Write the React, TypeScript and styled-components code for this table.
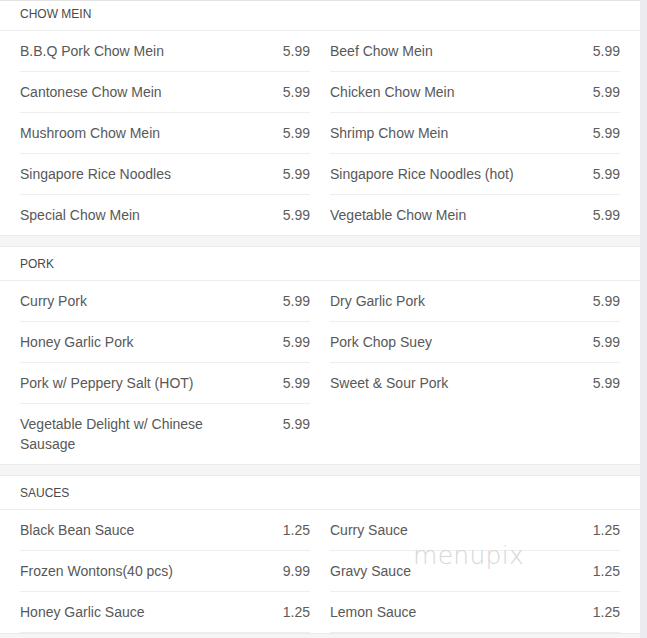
import styled, { createGlobalStyle } from 'styled-components'
import { FC } from 'react'

type Item = { name: string; price: string }
type Section = { title: string; left: Item[]; right: Item[]; continues?: boolean }

const sections: Section[] = [
  {
    title: 'Chow Mein',
    left: [
      { name: 'B.B.Q Pork Chow Mein', price: '5.99' },
      { name: 'Cantonese Chow Mein', price: '5.99' },
      { name: 'Mushroom Chow Mein', price: '5.99' },
      { name: 'Singapore Rice Noodles', price: '5.99' },
      { name: 'Special Chow Mein', price: '5.99' },
    ],
    right: [
      { name: 'Beef Chow Mein', price: '5.99' },
      { name: 'Chicken Chow Mein', price: '5.99' },
      { name: 'Shrimp Chow Mein', price: '5.99' },
      { name: 'Singapore Rice Noodles (hot)', price: '5.99' },
      { name: 'Vegetable Chow Mein', price: '5.99' },
    ],
  },
  {
    title: 'Pork',
    left: [
      { name: 'Curry Pork', price: '5.99' },
      { name: 'Honey Garlic Pork', price: '5.99' },
      { name: 'Pork w/ Peppery Salt (HOT)', price: '5.99' },
      { name: 'Vegetable Delight w/ Chinese Sausage', price: '5.99' },
    ],
    right: [
      { name: 'Dry Garlic Pork', price: '5.99' },
      { name: 'Pork Chop Suey', price: '5.99' },
      { name: 'Sweet & Sour Pork', price: '5.99' },
    ],
  },
  {
    title: 'Sauces',
    continues: true,
    left: [
      { name: 'Black Bean Sauce', price: '1.25' },
      { name: 'Frozen Wontons(40 pcs)', price: '9.99' },
      { name: 'Honey Garlic Sauce', price: '1.25' },
    ],
    right: [
      { name: 'Curry Sauce', price: '1.25' },
      { name: 'Gravy Sauce', price: '1.25' },
      { name: 'Lemon Sauce', price: '1.25' },
    ],
  },
]

const MenuColumn: FC<{ items: Item[]; continues?: boolean }> = ({ items, continues }) => (
  <Column $continues={continues}>
    {items.map((item) => (
      <Row key={item.name}>
        <Name>{item.name}</Name>
        <Price>{item.price}</Price>
      </Row>
    ))}
  </Column>
)

export default function App() {
  return (
    <>
      <GlobalStyle />
      <Viewport>
        <Panel>
          {sections.map((s) => (
            <Card key={s.title}>
              <Header>{s.title}</Header>
              <Grid>
                <MenuColumn items={s.left} continues={s.continues} />
                <MenuColumn items={s.right} continues={s.continues} />
              </Grid>
            </Card>
          ))}
          <Watermark>menupix</Watermark>
        </Panel>
      </Viewport>
    </>
  )
}

const GlobalStyle = createGlobalStyle`
  html, body {
    margin: 0;
    padding: 0;
    background: #ececf0;
    font-family: "Liberation Sans", Arial, sans-serif;
  }
  body {
    height: 638px;
    overflow: hidden;
  }
`

const Viewport = styled.div`
  width: 640px;
  height: 637px;
  overflow: hidden;
  border-top: 1px solid #e4e4e4;
  background: #f5f5f5;
`

const Panel = styled.div`
  position: relative;
  display: flex;
  flex-direction: column;
  gap: 10px;
  margin-top: -5px;
`

const Card = styled.section`
  background: #fff;
  border-top: 1px solid #ebebeb;
  border-bottom: 1px solid #ebebeb;
`

const Header = styled.div`
  height: 33px;
  line-height: 35px;
  padding: 0 20px;
  border-bottom: 1px solid #ececec;
  font-size: 12px;
  color: #4a4a4a;
  text-transform: uppercase;
`

const Grid = styled.div`
  display: grid;
  grid-template-columns: 290px 290px;
  column-gap: 20px;
  padding: 0 20px;
`

const Row = styled.div`
  display: flex;
  justify-content: space-between;
  align-items: flex-start;
  padding: 10px 0;
  line-height: 20px;
  font-size: 14px;
  color: #585858;
  border-bottom: 1px solid #eeeeee;
`

const Column = styled.div<{ $continues?: boolean }>`
  display: flex;
  flex-direction: column;
  ${Row}:last-child {
    border-bottom: ${(p) => (p.$continues ? '1px solid #eeeeee' : 'none')};
  }
`

const Name = styled.span`
  max-width: 215px;
`

const Price = styled.span`
  color: #5c5c5c;
`

const Watermark = styled.div`
  position: absolute;
  left: 413px;
  top: 545px;
  font-family: "DejaVu Sans", sans-serif;
  font-weight: 200;
  font-size: 25px;
  letter-spacing: 0.3px;
  color: #d6d6d6;
  pointer-events: none;
`
